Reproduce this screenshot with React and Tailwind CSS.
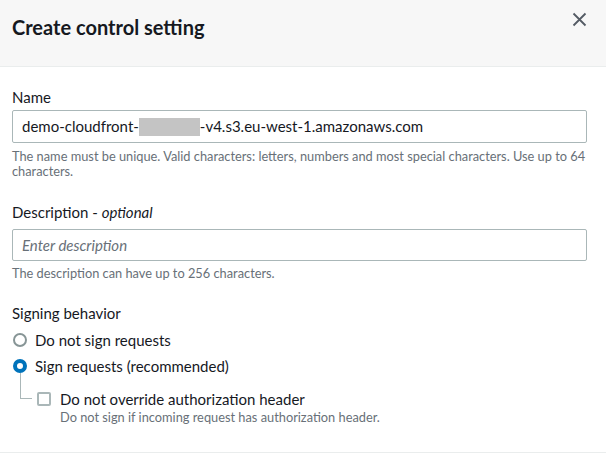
import React from "react";

export default function App() {
  return (
    <div className="w-[606px] h-[455px] overflow-hidden bg-white text-[#16191f] font-['Lato',sans-serif]">
      <div className="h-[67px] bg-[#f7f7f7] border-b border-[#eaeded] flex items-start justify-between pl-[12px] pr-[19px]">
        <h1 className="mt-[14px] text-[20px] font-bold leading-[26px]">Create control setting</h1>
        <svg className="mt-[12px]" width="15" height="15" viewBox="0 0 15 15" fill="none" stroke="#545b64" strokeWidth="1.8">
          <path d="M1.5 1.5 L13.5 13.5 M13.5 1.5 L1.5 13.5" />
        </svg>
      </div>
      <div className="px-[12px] pt-[20px] h-[386px] border-b border-[#eaeded]">
        <div className="text-[15px] leading-[20px]">Name</div>
        <div className="mt-[3px] h-[33px] w-[575px] border border-[#aab7b8] rounded-[2px] flex items-center pl-[9px] text-[15px]">
          <span>demo-cloudfront-</span>
          <span className="inline-block w-[61px] h-[18px] bg-[#c4c4c4]"></span>
          <span>-v4.s3.eu-west-1.amazonaws.com</span>
        </div>
        <div className="mt-[6px] text-[12.8px] leading-[15px] text-[#687078]">
          <div className="whitespace-nowrap">
            The name must be unique. Valid characters: letters, numbers and most special characters. Use up to 64
          </div>
          <div>characters.</div>
        </div>
        <div className="mt-[23px] text-[15px] leading-[20px]">
          Description - <i>optional</i>
        </div>
        <div className="mt-[7px] h-[32px] w-[575px] border border-[#aab7b8] rounded-[2px] flex items-center pl-[9px] text-[15px] italic text-[#687078]">
          Enter description
        </div>
        <div className="mt-[5px] text-[12.8px] leading-[15px] text-[#687078]">
          The description can have up to 256 characters.
        </div>
        <div className="mt-[22px] text-[15px] leading-[20px]">Signing behavior</div>
        <div className="mt-[7px] flex items-center h-[20px]">
          <span className="w-[14px] h-[14px] ml-[1px] rounded-full border-2 border-[#879596] bg-white"></span>
          <span className="ml-[8px] text-[15px]">Do not sign requests</span>
        </div>
        <div className="mt-[6px] flex items-center h-[20px]">
          <span className="w-[14px] h-[14px] ml-[1px] rounded-full border-[4px] border-[#0073bb] bg-white"></span>
          <span className="ml-[8px] text-[15px]">Sign requests (recommended)</span>
        </div>
        <div className="flex">
          <div className="ml-[8px] -mt-[3px] w-[12px] h-[26px] border-l border-b border-[#aab7b8]"></div>
          <div className="ml-[5px] mt-[16px] w-[14px] h-[14px] border-2 border-[#aab7b8] rounded-[2px]"></div>
          <div className="ml-[9px] mt-[13px]">
            <div className="text-[15px] leading-[20px]">Do not override authorization header</div>
            <div className="text-[12.8px] leading-[16px] text-[#687078]">Do not sign if incoming request has authorization header.</div>
          </div>
        </div>
      </div>
    </div>
  );
}
